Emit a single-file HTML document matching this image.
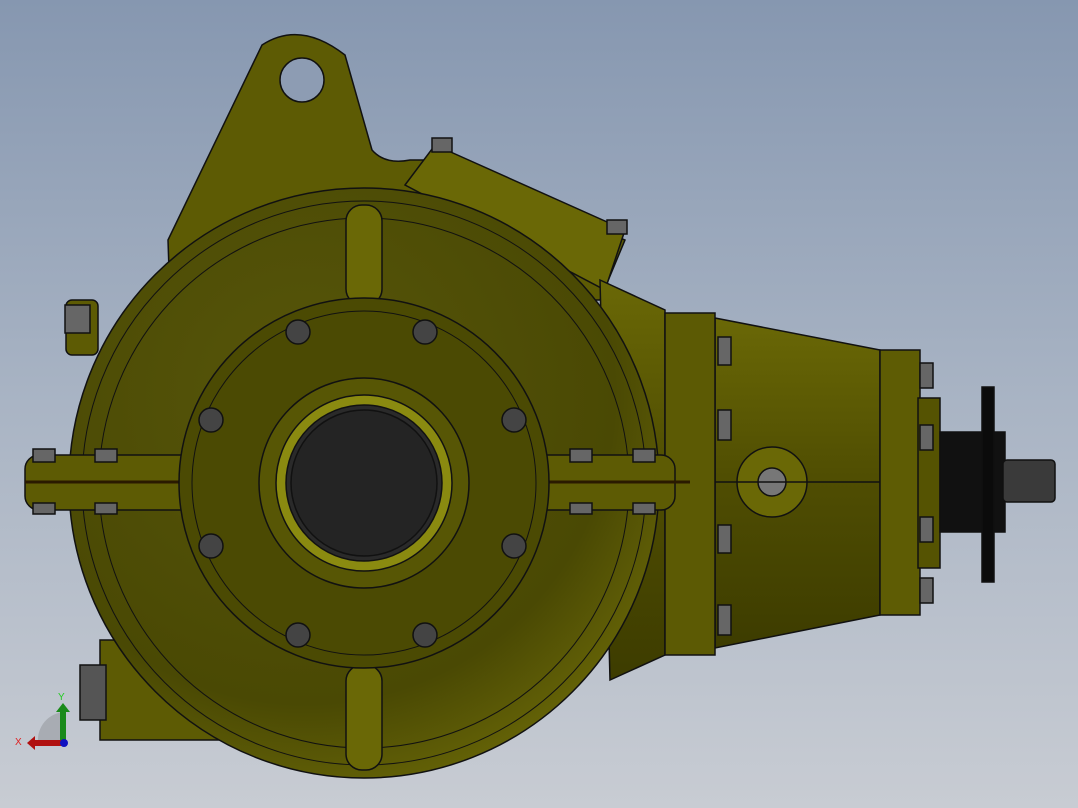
<!DOCTYPE html>
<html><head><style>
html,body{margin:0;padding:0;width:1078px;height:808px;overflow:hidden}
body{background:linear-gradient(#8697b0 0%,#a9b4c4 50%,#c8ccd3 100%)}
svg{position:absolute;left:0;top:0}
</style></head><body>
<svg width="1078" height="808" viewBox="0 0 1078 808" xmlns="http://www.w3.org/2000/svg">
<defs>
<radialGradient id="body" cx="0.4" cy="0.35" r="0.75">
<stop offset="0" stop-color="#57560a"/><stop offset="0.7" stop-color="#4a4904"/><stop offset="1" stop-color="#6e6c08"/>
</radialGradient>
<linearGradient id="box" x1="0" y1="0" x2="0" y2="1">
<stop offset="0" stop-color="#6a6806"/><stop offset="0.5" stop-color="#4f4d02"/><stop offset="1" stop-color="#3d3c00"/>
</linearGradient>
</defs>
<g stroke="#111" stroke-width="1.5">
<path d="M168,240 L262,45 Q300,20 345,55 L372,150 Q385,165 410,160 L440,160 L625,240 L600,300 L170,300 Z" fill="#5d5b04"/>
<circle cx="302" cy="80" r="22" fill="#8d9cb3"/>
<path d="M405,185 L435,145 L625,230 L605,290 Z" fill="#6a6806"/>
<path d="M600,280 L665,310 L665,655 L610,680 Z" fill="url(#box)"/>
<path d="M715,318 L880,350 L880,615 L715,648 Z" fill="url(#box)"/>
<rect x="665" y="313" width="50" height="342" fill="#5c5a04"/>
<rect x="880" y="350" width="40" height="265" fill="#5e5c04"/>
<rect x="918" y="398" width="22" height="170" fill="#555302"/>
<rect x="940" y="432" width="65" height="100" fill="#111"/>
<rect x="982" y="387" width="12" height="195" fill="#0b0b0b"/>
<rect x="1003" y="460" width="52" height="42" rx="4" fill="#3a3a3a"/>
<circle cx="772" cy="482" r="35" fill="#6a6806"/>
<circle cx="772" cy="482" r="14" fill="#777"/>
<line x1="715" y1="482" x2="880" y2="482"/>
<rect x="100" y="640" width="130" height="100" fill="#5d5b04"/>
<rect x="80" y="665" width="26" height="55" fill="#555"/>
<rect x="66" y="300" width="32" height="55" rx="6" fill="#5d5b04"/>
<circle cx="364" cy="483" r="295" fill="url(#body)"/>
<circle cx="364" cy="483" r="282" fill="none" stroke-width="1"/>
<circle cx="364" cy="483" r="265" fill="none" stroke-width="1"/>
<rect x="25" y="455" width="650" height="55" rx="14" fill="#5d5b04"/>
<line x1="25" y1="482" x2="690" y2="482" stroke="#2a1a00" stroke-width="3"/>
<rect x="346" y="205" width="36" height="100" rx="16" fill="#6a6806"/>
<rect x="346" y="665" width="36" height="105" rx="16" fill="#6a6806"/>
<circle cx="364" cy="483" r="185" fill="#4b4a03"/>
<circle cx="364" cy="483" r="172" fill="none" stroke-width="1"/>
<circle cx="364" cy="483" r="105" fill="#575605"/>
<circle cx="364" cy="483" r="88" fill="#8a8a10"/>
<circle cx="364" cy="483" r="78" fill="#2a2a2a"/>
<circle cx="364" cy="483" r="73" fill="#242424"/>
<g fill="#444">
<circle cx="298" cy="332" r="12"/><circle cx="425" cy="332" r="12"/>
<circle cx="211" cy="420" r="12"/><circle cx="514" cy="420" r="12"/>
<circle cx="211" cy="546" r="12"/><circle cx="514" cy="546" r="12"/>
<circle cx="298" cy="635" r="12"/><circle cx="425" cy="635" r="12"/>
</g>
<g fill="#666">
<rect x="33" y="449" width="22" height="13"/><rect x="33" y="503" width="22" height="11"/>
<rect x="95" y="449" width="22" height="13"/><rect x="95" y="503" width="22" height="11"/>
<rect x="570" y="449" width="22" height="13"/><rect x="570" y="503" width="22" height="11"/>
<rect x="633" y="449" width="22" height="13"/><rect x="633" y="503" width="22" height="11"/>
<rect x="718" y="337" width="13" height="28"/><rect x="718" y="410" width="13" height="30"/>
<rect x="718" y="525" width="13" height="28"/><rect x="718" y="605" width="13" height="30"/>
<rect x="920" y="363" width="13" height="25"/><rect x="920" y="425" width="13" height="25"/>
<rect x="920" y="517" width="13" height="25"/><rect x="920" y="578" width="13" height="25"/>
<rect x="65" y="305" width="25" height="28"/>
<rect x="432" y="138" width="20" height="14"/><rect x="607" y="220" width="20" height="14"/>
</g>
</g>
<path d="M38,742 A28,28 0 0 1 64,712 L64,742 Z" fill="#a8acb3"/>
<rect x="60" y="712" width="6" height="30" fill="#1a8a1a"/>
<path d="M56,712 L63,703 L70,712 Z" fill="#1a8a1a"/>
<rect x="35" y="740" width="28" height="6" fill="#b01010"/>
<path d="M35,736 L27,743 L35,750 Z" fill="#b01010"/>
<circle cx="64" cy="743" r="4" fill="#1010c0"/>
<text x="58" y="700" font-family="Liberation Sans,sans-serif" font-size="10" fill="#2c2">Y</text>
<text x="15" y="745" font-family="Liberation Sans,sans-serif" font-size="10" fill="#d22">X</text>
</svg>
</body></html>
